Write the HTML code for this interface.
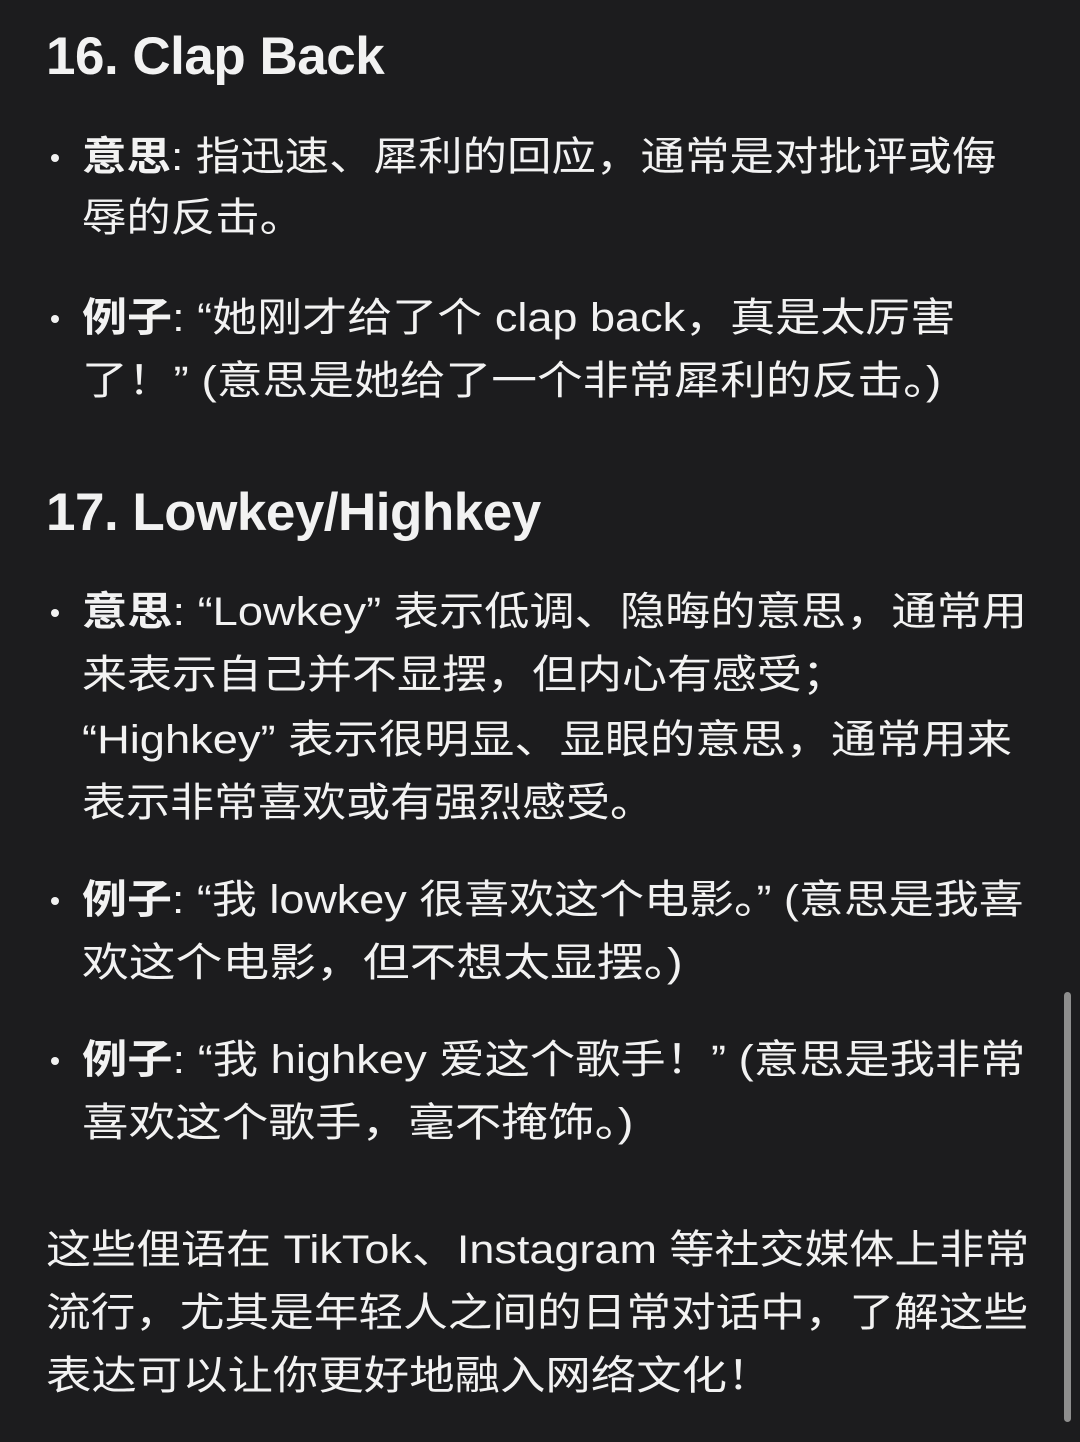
<!DOCTYPE html>
<html><head><meta charset="utf-8"><style>
html,body{margin:0;padding:0;}
body{width:1080px;height:1442px;background:#1c1c1e;position:relative;overflow:hidden;color:#f2f2f2;font-family:"Liberation Sans","Noto Sans CJK SC",sans-serif;}
.l{position:absolute;left:82px;font-size:40px;line-height:62px;height:62px;white-space:nowrap;transform-origin:0 50%;}
.h{position:absolute;left:46px;font-size:53px;font-weight:bold;line-height:62px;white-space:nowrap;letter-spacing:-0.5px;}
.d{position:absolute;left:51px;width:8px;height:8px;border-radius:50%;background:#f2f2f2;}
b{font-weight:bold;}
.p{left:46px;}
.sb{position:absolute;left:1064px;top:992px;width:7px;height:430px;border-radius:4px;background:#8e8e8e;}
</style></head><body>
<div class="h" style="top:26px">16. Clap Back</div>
<div class="d" style="top:154px"></div>
<div class="l" style="top:126px;transform:scaleX(1.112)"><b>意思</b>: 指迅速、犀利的回应，通常是对批评或侮</div>
<div class="l" style="top:187px;transform:scaleX(1.11)">辱的反击。</div>
<div class="d" style="top:315px"></div>
<div class="l" style="top:287px;transform:scaleX(1.126)"><b>例子</b>: “她刚才给了个 clap back，真是太厉害</div>
<div class="l" style="top:350px;transform:scaleX(1.144)">了！” (意思是她给了一个非常犀利的反击。)</div>
<div class="h" style="top:482px">17. Lowkey/Highkey</div>
<div class="d" style="top:609px"></div>
<div class="l" style="top:581px;transform:scaleX(1.131)"><b>意思</b>: “Lowkey” 表示低调、隐晦的意思，通常用</div>
<div class="l" style="top:644px;transform:scaleX(1.125)">来表示自己并不显摆，但内心有感受；</div>
<div class="l" style="top:709px;transform:scaleX(1.131)">“Highkey” 表示很明显、显眼的意思，通常用来</div>
<div class="l" style="top:772px;transform:scaleX(1.10)">表示非常喜欢或有强烈感受。</div>
<div class="d" style="top:897px"></div>
<div class="l" style="top:869px;transform:scaleX(1.124)"><b>例子</b>: “我 lowkey 很喜欢这个电影。” (意思是我喜</div>
<div class="l" style="top:932px;transform:scaleX(1.17)">欢这个电影，但不想太显摆。)</div>
<div class="d" style="top:1057px"></div>
<div class="l" style="top:1029px;transform:scaleX(1.132)"><b>例子</b>: “我 highkey 爱这个歌手！” (意思是我非常</div>
<div class="l" style="top:1092px;transform:scaleX(1.165)">喜欢这个歌手，毫不掩饰。)</div>
<div class="l p" style="top:1219px;transform:scaleX(1.125)">这些俚语在 TikTok、Instagram 等社交媒体上非常</div>
<div class="l p" style="top:1282px;transform:scaleX(1.116)">流行，尤其是年轻人之间的日常对话中，了解这些</div>
<div class="l p" style="top:1345px;transform:scaleX(1.135)">表达可以让你更好地融入网络文化！</div>
<div class="sb"></div>
</body></html>
